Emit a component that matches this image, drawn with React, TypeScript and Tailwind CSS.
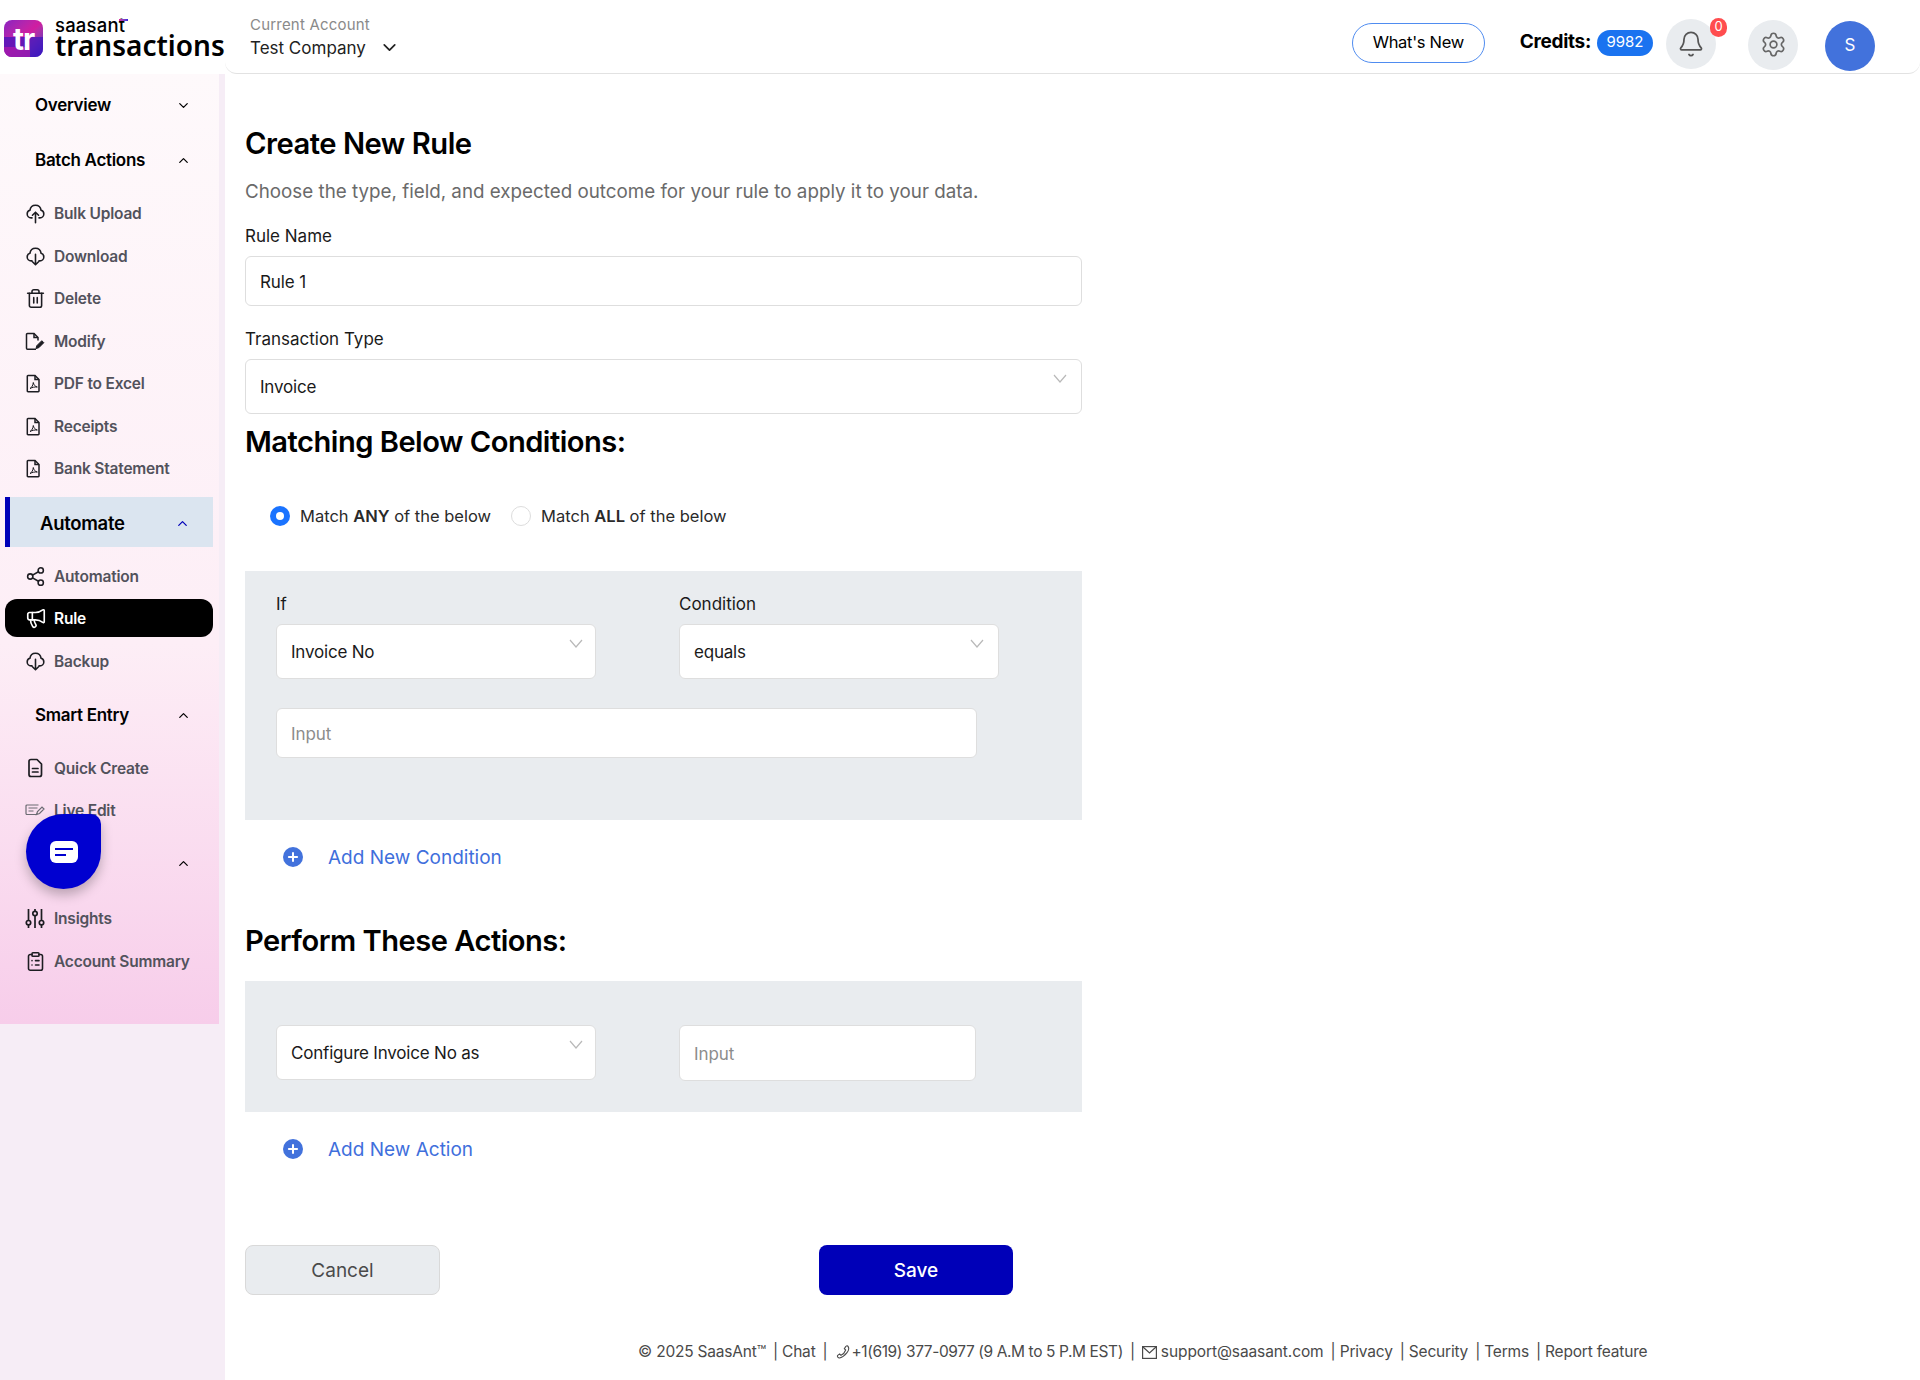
import { type ReactNode } from "react";
import {
  ChevronDown,
  ChevronUp,
  ClipboardList,
  Megaphone,
  Plus,
  Settings,
  Share2,
  Trash2,
  Bell,
} from "lucide-react";

type NavItem = { label: string; icon: ReactNode; active?: boolean };

function CloudIcon({ direction }: { direction: "up" | "down" }) {
  return (
    <svg width="21" height="23" viewBox="0 0 24 25" fill="none" stroke="currentColor" strokeWidth="1.800" strokeLinecap="round" strokeLinejoin="round">
      <path d="M8 17.500H7C4.500 17.500 2.500 15.500 2.500 13C2.500 11 3.800 9.300 5.600 8.800C6.100 5.500 8.700 3 12 3C15.300 3 17.900 5.500 18.400 8.800C20.200 9.300 21.500 11 21.500 13C21.500 15.500 19.500 17.500 17 17.500H16" />
      {direction === "up" ? <path d="M12 23V11M8.500 14.500L12 11L15.500 14.500" /> : <path d="M12 10V22M8.500 18.500L12 22L15.500 18.500" />}
    </svg>
  );
}

function PdfIcon() {
  return (
    <svg width="17" height="19" viewBox="0 0 17 19" fill="none" stroke="currentColor" strokeWidth="1.500">
      <path d="M3 1.500h7l4 4v11.500a.7.7 0 0 1-.7.7H3a.7.7 0 0 1-.7-.7V2.200a.7.7 0 0 1 .7-.7z" />
      <path d="M10 1.500v4h4" />
      <path d="M5 14.500c2-1 3-3.500 3.300-6 .5 2.500 1.800 4 4 4.500-2.400-.2-5 .3-7.300 1.500z" strokeWidth="1" />
    </svg>
  );
}

function ModifyIcon() {
  return (
    <svg width="20" height="19" viewBox="0 0 20 19" fill="none" stroke="currentColor" strokeWidth="1.500">
      <path d="M11 17.200H2.500a1 1 0 0 1-1-1V2.500a1 1 0 0 1 1-1h6.500l4 4v3" />
      <path d="M9 1.500v4h4" />
      <path d="M11 16.500l.8-2.800 5-5 2 2-5 5z" fill="currentColor" strokeWidth="1" />
    </svg>
  );
}

function LiveEditIcon() {
  return (
    <svg width="20" height="12" viewBox="0 0 20 12" fill="none" stroke="#6b6b73" strokeWidth="1.200" className="mb-[2px]">
      <path d="M12 10.500H2a1 1 0 0 1-1-1V2a1 1 0 0 1 1-1h11.500" />
      <path d="M3.500 4h9M3.500 7h5" />
      <path d="M11.500 10.500l1-3 4.500-4.500 2 2-4.500 4.500z" />
    </svg>
  );
}

function QuickCreateIcon() {
  return (
    <svg width="20" height="20" viewBox="0 0 20 20" fill="none" stroke="currentColor" strokeWidth="1.700" strokeLinejoin="round" strokeLinecap="round">
      <path d="M6 1.500h6l4.500 4.500v10.500a2 2 0 0 1-2 2H6a2 2 0 0 1-2-2v-13a2 2 0 0 1 2-2z" />
      <path d="M7.500 10.500h5.500M7.500 14h5.500" />
    </svg>
  );
}

function InsightsIcon() {
  return (
    <svg width="20" height="21" viewBox="0 0 20 21" fill="none" stroke="currentColor" strokeWidth="1.700">
      <path d="M3.500 1v11.500M3.500 17v3M10 1v2M10 8v12M16.500 1v11.500M16.500 17v3" />
      <circle cx="3.500" cy="14.700" r="2.200" />
      <circle cx="10" cy="5.500" r="2.200" />
      <circle cx="16.500" cy="14.700" r="2.200" />
    </svg>
  );
}

const icon = { size: 21, strokeWidth: 1.800 };

const batchItems: NavItem[] = [
  { label: "Bulk Upload", icon: <CloudIcon direction="up" /> },
  { label: "Download", icon: <CloudIcon direction="down" /> },
  { label: "Delete", icon: <Trash2 {...icon} /> },
  { label: "Modify", icon: <ModifyIcon /> },
  { label: "PDF to Excel", icon: <PdfIcon /> },
  { label: "Receipts", icon: <PdfIcon /> },
  { label: "Bank Statement", icon: <PdfIcon /> },
];

const automateItems: NavItem[] = [
  { label: "Automation", icon: <Share2 {...icon} /> },
  { label: "Rule", icon: <Megaphone size={22} strokeWidth={1.800} />, active: true },
  { label: "Backup", icon: <CloudIcon direction="down" /> },
];

const smartItems: NavItem[] = [
  { label: "Quick Create", icon: <QuickCreateIcon /> },
  { label: "Live Edit", icon: <LiveEditIcon /> },
];

const reportItems: NavItem[] = [
  { label: "Insights", icon: <InsightsIcon /> },
  { label: "Account Summary", icon: <ClipboardList {...icon} /> },
];

function SectionTitle({ label, open = true }: { label: string; open?: boolean }) {
  return (
    <div className="flex h-[55px] items-center justify-between pl-[35px] pr-[28px]">
      <span className="text-[17px] font-semibold tracking-[-0.3px] text-black">{label}</span>
      {open ? <ChevronUp size={15} strokeWidth={2} className="text-black" /> : <ChevronDown size={15} strokeWidth={2} className="text-black" />}
    </div>
  );
}

function NavRow({ item }: { item: NavItem }) {
  return (
    <div className="flex h-[42.500px] items-center">
      <div
        className={
          item.active
            ? "mb-[2px] ml-[5px] flex h-[38px] w-[208px] items-center rounded-xl bg-black pl-[20px] text-white"
            : "ml-[5px] flex h-[38px] w-[208px] items-center pl-[20px] text-[#1d1d22]"
        }
      >
        <span className="flex w-[29px] shrink-0 items-center">{item.icon}</span>
        <span className={item.active ? "text-[15.500px] font-semibold tracking-[-0.2px]" : "text-[15.500px] font-semibold tracking-[-0.2px] text-[#52525c]"}>
          {item.label}
        </span>
      </div>
    </div>
  );
}

function Sidebar() {
  return (
    <aside className="relative w-[225px] shrink-0 bg-[#f6edf6]">
      <div className="h-[950px] w-[219px] bg-gradient-to-b from-[#fef9fb] via-[#fdeef6] via-60% to-[#f7cdea] pt-[4px]">
        <SectionTitle label="Overview" open={false} />
        <SectionTitle label="Batch Actions" />
        <div className="mt-[4.400px]">
          {batchItems.map((item) => (
            <NavRow key={item.label} item={item} />
          ))}
        </div>
        <div className="ml-[5px] mt-[7.100px] flex h-[50px] w-[208px] items-center justify-between border-l-[5px] border-[#0000b8] bg-[#dbe5f0] pl-[30px] pr-[23px] pt-[3px]">
          <span className="text-[18.500px] font-semibold tracking-[-0.3px] text-black">Automate</span>
          <ChevronUp size={15} strokeWidth={2} className="text-[#0000b8]" />
        </div>
        <div className="mt-[8.500px]">
          {automateItems.map((item) => (
            <NavRow key={item.label} item={item} />
          ))}
        </div>
        <div className="mt-[5px]">
          <SectionTitle label="Smart Entry" />
        </div>
        <div className="mt-[4px]">
          {smartItems.map((item) => (
            <NavRow key={item.label} item={item} />
          ))}
        </div>
        <div className="mt-[4.500px]">
          <SectionTitle label="Reports" />
        </div>
        <div className="mt-[6px]">
          {reportItems.map((item) => (
            <NavRow key={item.label} item={item} />
          ))}
        </div>
      </div>
      {/* chat launcher floats over the nav */}
      <div className="absolute left-[26px] top-[740px] flex h-[75px] w-[75px] items-center justify-center rounded-[50%] rounded-tr-[10px] bg-[#0000d0] shadow-[0_6px_12px_rgba(0,0,0,0.25)]">
        <div className="flex h-[22px] w-[28px] flex-col justify-center gap-[4px] rounded-[6px] bg-white pl-[5px]">
          <span className="h-[2px] w-[18px] bg-[#0000d0]" />
          <span className="h-[2px] w-[11px] bg-[#0000d0]" />
        </div>
      </div>
    </aside>
  );
}

function Header() {
  return (
    <header className="flex h-[74px] shrink-0 bg-white">
      <div className="flex w-[225px] shrink-0 pl-[4px] pt-[20px]">
        <div className="relative flex h-[37px] w-[39px] shrink-0 items-center justify-center overflow-hidden rounded-lg bg-gradient-to-br from-[#8a1fc0] via-[#d11ca0] to-[#2c10c4]">
          <div className="absolute bottom-0 right-0 h-[20px] w-[39px] bg-[#3d14bd]/70" />
          <div className="absolute bottom-0 left-0 h-[10px] w-[26px] bg-[#c01aa8]/60" />
          <span className="relative text-[30px] font-bold leading-none tracking-[-1px] text-white">tr</span>
        </div>
        <div className="-mt-[1px] ml-[12px] flex flex-col">
          <div className="relative h-[12px] w-fit text-[18.500px] font-medium leading-[12px] tracking-[0.2px] text-black">
            saasant
            <span className="absolute right-[-3px] top-[0px] h-[2px] w-[9px] bg-gradient-to-r from-[#e0209a] to-[#3020e0]" />
          </div>
          <div className="font-['Noto_Sans',sans-serif] text-[28px] font-semibold leading-[28px] text-black">transactions</div>
        </div>
      </div>
      <div className="flex flex-1 items-center justify-between rounded-b-xl border-b border-[#e2e2e2] pl-[25px] pr-[45px]">
        <div className="flex flex-col">
          <span className="text-[15px] leading-[22px] tracking-[0.2px] text-[#8a8a8a]">Current Account</span>
          <div className="flex items-center gap-[13px]">
            <span className="text-[17px] leading-[24px] text-[#222]">Test Company</span>
            <ChevronDown size={21} strokeWidth={2} className="text-[#222]" />
          </div>
        </div>
        <div className="flex items-center pt-[12px]">
          <div className="flex h-[40px] w-[133px] items-center justify-center rounded-[20px] border border-[#4f8cf0] text-[16.500px] tracking-[-0.3px] text-black">
            What's New
          </div>
          <span className="ml-[35px] text-[19px] font-bold tracking-[-0.3px] text-black">Credits:</span>
          <span className="ml-[6px] flex h-[26px] w-[56px] items-center justify-center rounded-[13px] bg-[#1a73f0] text-[15px] text-white">9982</span>
          <div className="relative ml-[13px] mt-[2px] flex h-[50px] w-[50px] items-center justify-center rounded-full bg-[#e9ecef] text-[#555]">
            <Bell size={28} strokeWidth={1.500} />
            <span className="absolute right-[-11px] top-[-1px] flex h-[19px] w-[17px] items-center justify-center rounded-full bg-[#ff4d4f] text-[13px] text-white">0</span>
          </div>
          <div className="ml-[32px] mt-[4px] flex h-[50px] w-[50px] items-center justify-center rounded-full bg-[#e9ecef] text-[#666]">
            <Settings size={27} strokeWidth={1.500} />
          </div>
          <div className="ml-[27px] mt-[6px] flex h-[50px] w-[50px] items-center justify-center rounded-full bg-[#4272dc] text-[17px] text-white">S</div>
        </div>
      </div>
    </header>
  );
}

function Label({ children, className = "" }: { children: ReactNode; className?: string }) {
  return <div className={`text-[17px] leading-[24px] text-[#1a1a1a] ${className}`}>{children}</div>;
}

function Select({ value, className = "" }: { value: string; className?: string }) {
  return (
    <div className={`flex items-center justify-between rounded-md border border-[#dedede] bg-white pl-[14px] text-[17px] tracking-[-0.2px] text-[#1a1a1a] ${className}`}>
      <span className="pt-[2px]">{value}</span>
      <svg width="14" height="9" viewBox="0 0 14 9" fill="none" stroke="#b9b9b9" strokeWidth="1.200" className="mb-[16px]">
        <path d="M1 1l6 7 6-7" />
      </svg>
    </div>
  );
}

function Field({ value, placeholder, className = "" }: { value?: string; placeholder?: string; className?: string }) {
  return (
    <div className={`flex items-center rounded-md border border-[#dedede] bg-white pl-[14px] pt-[3px] text-[17px] tracking-[-0.1px] ${value ? "text-[#1a1a1a]" : "text-[#8c8c8c]"} ${className}`}>
      {value ?? placeholder}
    </div>
  );
}

function AddLink({ label, className = "" }: { label: string; className?: string }) {
  return (
    <div className={`flex h-[24px] items-center pl-[38px] ${className}`}>
      <span className="flex h-[20px] w-[20px] items-center justify-center rounded-full bg-[#4272dc] text-white">
        <Plus size={14} strokeWidth={3.500} />
      </span>
      <span className="ml-[25px] pt-[2px] text-[19px] text-[#3f6fdc]">{label}</span>
    </div>
  );
}

function Radio({ checked, children }: { checked?: boolean; children: ReactNode }) {
  return (
    <div className="flex items-center">
      {checked ? (
        <span className="flex h-[20px] w-[20px] items-center justify-center rounded-full bg-[#1a73ff]">
          <span className="h-[8px] w-[8px] rounded-full bg-white" />
        </span>
      ) : (
        <span className="h-[20px] w-[20px] rounded-full border border-[#dddddd] bg-white" />
      )}
      <span className="ml-[10px] text-[16.500px] text-[#2a2a2a]">{children}</span>
    </div>
  );
}

const footerLinks = ["Privacy", "Security", "Terms", "Report feature"];

function Footer() {
  return (
    <footer className="ml-[393px] mt-[47px] flex h-[20px] items-center text-[15.500px] tracking-[-0.2px] text-[#4a4a4a]">
      <span>© 2025 SaasAnt™</span>
      <span className="ml-[7px]">| Chat</span>
      <span className="ml-[7px]">|</span>
      <svg width="16" height="16" viewBox="0 0 24 24" fill="none" stroke="currentColor" strokeWidth="1.600" className="ml-[8px]">
        <path d="M19 3c2 2 2 6-1 10s-7 7-11 8c-3 0-4-3-3-4l3-2 2 2c2-1 6-5 7-8l-2-2 2-3c1-1 2-2 3-1z" />
      </svg>
      <span className="tracking-[-0.4px]">+1(619) 377-0977 (9 A.M to 5 P.M EST)</span>
      <span className="ml-[7px]">|</span>
      <svg width="15" height="13" viewBox="0 0 15 13" fill="none" stroke="currentColor" strokeWidth="1.200" className="ml-[7px]">
        <rect x="0.6" y="0.6" width="13.800" height="11.800" />
        <path d="M1 1l6.500 6L14 1" />
      </svg>
      <span className="ml-[4px] tracking-[-0.1px]">support@saasant.com</span>
      {footerLinks.map((link) => (
        <span key={link} className="ml-[7px]">
          | {link}
        </span>
      ))}
    </footer>
  );
}

function RuleForm() {
  return (
    <main className="flex-1 pl-[20px]">
      <div className="w-[837px]">
        <h1 className="mt-[52px] text-[29.200px] font-semibold leading-[36px] tracking-[-0.5px] text-black">Create New Rule</h1>
        <p className="mt-[16px] text-[18.800px] leading-[28px] text-[#6a6a6a]">Choose the type, field, and expected outcome for your rule to apply it to your data.</p>
        <Label className="mt-[18px]">Rule Name</Label>
        <Field value="Rule 1" className="mt-[8px] h-[50px]" />
        <Label className="mt-[21px]">Transaction Type</Label>
        <Select value="Invoice" className="mt-[8px] h-[55px] pr-[14px]" />
        <h2 className="mt-[10px] text-[29.100px] font-semibold leading-[36px] tracking-[-0.5px] text-black">Matching Below Conditions:</h2>
        <div className="mt-[44px] flex h-[24px] items-center gap-[20px] pl-[25px]">
          <Radio checked>
            Match <b className="font-semibold">ANY</b> of the below
          </Radio>
          <Radio>
            Match <b className="font-semibold">ALL</b> of the below
          </Radio>
        </div>

        <section className="mt-[43px] h-[249px] bg-[#e9ecef] pl-[31px] pt-[21px]">
          <div className="flex gap-[83px]">
            <div className="w-[320px]">
              <Label>If</Label>
              <Select value="Invoice No" className="mt-[8px] h-[55px] pr-[12px]" />
            </div>
            <div className="w-[320px]">
              <Label>Condition</Label>
              <Select value="equals" className="mt-[8px] h-[55px] pr-[14px]" />
            </div>
          </div>
          <Field placeholder="Input" className="mt-[29px] h-[50px] w-[701px]" />
        </section>
        <AddLink label="Add New Condition" className="mt-[25px]" />

        <h2 className="mt-[54px] text-[29.100px] font-semibold leading-[36px] tracking-[-0.5px] text-black">Perform These Actions:</h2>
        <section className="mt-[22px] h-[131px] bg-[#e9ecef] pl-[31px] pt-[44px]">
          <div className="flex gap-[83px]">
            <Select value="Configure Invoice No as" className="h-[55px] w-[320px] pr-[12px]" />
            <Field placeholder="Input" className="h-[56px] w-[297px]" />
          </div>
        </section>
        <AddLink label="Add New Action" className="mt-[25px]" />

        <div className="mt-[84px] flex gap-[379px]">
          <button className="h-[50px] w-[195px] rounded-lg border border-[#d9d9d9] bg-[#e9ecef] pt-[3px] text-[19px] text-[#4a4a4a]">Cancel</button>
          <button className="h-[50px] w-[194px] rounded-lg bg-[#0000b8] pt-[3px] text-[19px] font-medium text-white">Save</button>
        </div>
      </div>
      <Footer />
    </main>
  );
}

export default function App() {
  return (
    <div className="flex h-[1380px] w-full flex-col overflow-hidden bg-white font-['Inter',sans-serif]">
      <Header />
      <div className="flex flex-1">
        <Sidebar />
        <RuleForm />
      </div>
    </div>
  );
}
